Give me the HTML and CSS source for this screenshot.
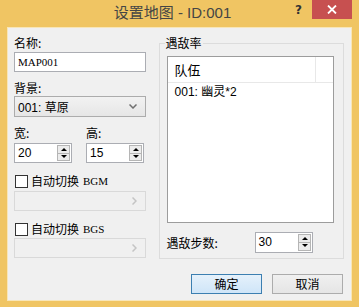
FILE: index.html
```html
<!DOCTYPE html>
<html lang="zh">
<head>
    <meta charset="UTF-8">
    <title>设置地图 - ID:001</title>
    <link rel="stylesheet" href="styles.css">
</head>
<body>
    <div class="window">
        <div class="titlebar">
            <span class="title">设置地图 - ID:001</span>
            <span class="help">?</span>
            <span class="close">
                <svg width="10" height="9" viewBox="0 0 10 9"><path d="M1 0.5 L9 8.5 M9 0.5 L1 8.5" stroke="#fff" stroke-width="1.8" fill="none"/></svg>
            </span>
        </div>

        <div class="client">
            <div class="main">
                <div class="left">
                    <div class="lbl">名称:</div>
                    <div class="textbox mono">MAP001</div>

                    <div class="lbl gap">背景:</div>
                    <div class="combo">
                        <span>001: 草原</span>
                        <svg width="8" height="5" viewBox="0 0 8 5"><path d="M0.5 0.5 L4 4 L7.5 0.5" stroke="#707070" stroke-width="1.5" fill="none"/></svg>
                    </div>

                    <div class="size-row">
                        <div class="size-field">
                            <div class="lbl">宽:</div>
                            <div class="spin">
                                <span class="val">20</span>
                                <span class="arrows"><span class="up"></span><span class="down"></span></span>
                            </div>
                        </div>
                        <div class="size-field">
                            <div class="lbl">高:</div>
                            <div class="spin">
                                <span class="val">15</span>
                                <span class="arrows"><span class="up"></span><span class="down"></span></span>
                            </div>
                        </div>
                    </div>

                    <div class="check"><span class="box"></span>自动切换 <span class="mono">BGM</span></div>
                    <div class="combo disabled">
                        <svg width="5" height="8" viewBox="0 0 5 8"><path d="M0.5 0.5 L4 4 L0.5 7.5" stroke="#c4c4c4" stroke-width="1.5" fill="none"/></svg>
                    </div>

                    <div class="check"><span class="box"></span>自动切换 <span class="mono">BGS</span></div>
                    <div class="combo disabled tight">
                        <svg width="5" height="8" viewBox="0 0 5 8"><path d="M0.5 0.5 L4 4 L0.5 7.5" stroke="#c4c4c4" stroke-width="1.5" fill="none"/></svg>
                    </div>
                </div>

                <div class="group">
                    <div class="group-title">遇敌率</div>
                    <div class="listbox">
                        <div class="list-head">
                            <span class="col">队伍</span>
                            <span class="col-rest"></span>
                        </div>
                        <div class="list-row">001: 幽灵*2</div>
                    </div>
                    <div class="steps">
                        <span>遇敌步数:</span>
                        <div class="spin">
                            <span class="val">30</span>
                            <span class="arrows"><span class="up"></span><span class="down"></span></span>
                        </div>
                    </div>
                </div>
            </div>

            <div class="buttons">
                <div class="btn default">确定</div>
                <div class="btn">取消</div>
            </div>
        </div>
    </div>
</body>
</html>
```

FILE: styles.css
```css
body {
    margin: 0;
    font-family: "Noto Sans CJK SC", "Liberation Sans", sans-serif;
    font-size: 12px;
    color: #000;
}
.window {
    width: 359px;
    height: 307px;
    background: #f0c563;
    box-sizing: border-box;
    padding: 0 7px 6px 7px;
}
.titlebar {
    height: 27px;
    display: flex;
    align-items: flex-start;
}
.title {
    flex: 1;
    text-align: center;
    font-family: "Liberation Sans", "Noto Sans CJK SC", sans-serif;
    font-size: 15px;
    line-height: 26px;
    color: #454545;
    padding-left: 43px;
}
.help {
    width: 14px;
    margin-top: 3px;
    margin-right: 3px;
    font-family: "DejaVu Sans", sans-serif;
    font-weight: bold;
    font-size: 12px;
    line-height: 14px;
    color: #333;
}
.close {
    width: 40px;
    height: 19px;
    background: #c75050;
    display: flex;
    align-items: center;
    justify-content: center;
}
.client {
    height: 274px;
    box-sizing: border-box;
    background: #f0f0f0;
    border: 1px solid #f8e6b8;
    padding: 7px 7px 0 6px;
}
.main {
    display: flex;
    align-items: flex-start;
}
.left {
    width: 132px;
    display: flex;
    flex-direction: column;
}
.lbl {
    height: 16px;
    line-height: 16px;
}
.lbl.gap {
    margin-top: 8px;
}
.mono {
    font-family: "Liberation Serif", serif;
    font-size: 11px;
}
.textbox {
    margin-top: 1px;
    height: 20px;
    box-sizing: border-box;
    background: #fff;
    border: 1px solid #abadb3;
    line-height: 18px;
    padding-left: 3px;
}
.combo {
    height: 21px;
    box-sizing: border-box;
    background: linear-gradient(#f2f2f2, #e6e6e6);
    border: 1px solid #acacac;
    display: flex;
    align-items: center;
    justify-content: space-between;
    padding: 0 8px 0 3px;
    font-family: "Liberation Sans", "Noto Sans CJK SC", sans-serif;
    font-size: 12px;
}
.combo.disabled {
    height: 20px;
    margin-top: 2px;
    background: #f0f0f0;
    border-color: #d9d9d9;
    justify-content: flex-end;
}
.combo.disabled.tight {
    margin-top: 1px;
}
.size-row {
    display: flex;
    gap: 14px;
    margin-top: 8px;
}
.size-field {
    width: 58px;
    display: flex;
    flex-direction: column;
    gap: 2px;
}
.spin {
    width: 58px;
    height: 20px;
    box-sizing: border-box;
    background: #fff;
    border: 1px solid #abadb3;
    display: flex;
    justify-content: space-between;
    padding: 1px 1px 1px 3px;
    font-family: "Liberation Sans", sans-serif;
    font-size: 12px;
    line-height: 16px;
}
.arrows {
    width: 13px;
    display: flex;
    flex-direction: column;
}
.arrows span {
    flex: 1;
    border: 1px solid #b5b5b5;
    background: #ececec;
    position: relative;
}
.arrows .down {
    border-top: none;
}
.arrows span::after {
    content: "";
    position: absolute;
    left: 3px;
    top: 2px;
    border-left: 3px solid transparent;
    border-right: 3px solid transparent;
}
.arrows .up::after {
    border-bottom: 3px solid #000;
}
.arrows .down::after {
    top: 1px;
    border-top: 3px solid #000;
}
.check {
    margin-top: 10px;
    height: 16px;
    line-height: 16px;
    display: flex;
    align-items: center;
}
.check .mono {
    margin-left: 4px;
}
.box {
    width: 13px;
    height: 13px;
    box-sizing: border-box;
    border: 1px solid #333;
    background: #fff;
    margin: 0 3px 0 1px;
}
.group {
    margin-left: 13px;
    margin-top: 8px;
    width: 186px;
    height: 216px;
    box-sizing: border-box;
    border: 1px solid #dcdcdc;
    padding: 0 9px 0 7px;
}
.group-title {
    margin-top: -9px;
    margin-left: -2px;
    height: 16px;
    line-height: 16px;
    padding: 0 1px;
    background: #f0f0f0;
    width: max-content;
}
.listbox {
    margin-top: 5px;
    height: 167px;
    box-sizing: border-box;
    background: #fff;
    border: 1px solid #9c9c9c;
}
.list-head {
    height: 25px;
    display: flex;
    border-bottom: 1px solid #e8e8e8;
}
.list-head .col {
    width: 148px;
    padding-left: 7px;
    box-sizing: border-box;
    font-size: 13px;
    line-height: 25px;
    border-right: 1px solid #e8e8e8;
}
.list-row {
    padding-left: 7px;
    height: 16px;
    line-height: 16px;
    margin-top: 1px;
    font-family: "Liberation Sans", "Noto Sans CJK SC", sans-serif;
}
.steps {
    margin-top: 9px;
    display: flex;
    align-items: center;
    justify-content: space-between;
    width: 146px;
}
.steps .spin {
    height: 21px;
}
.buttons {
    display: flex;
    justify-content: flex-end;
    gap: 10px;
    margin-top: 15px;
    padding-right: 1px;
}
.btn {
    width: 71px;
    height: 20px;
    box-sizing: border-box;
    border: 1px solid #acacac;
    background: linear-gradient(#f0f0f0, #e5e5e5);
    text-align: center;
    line-height: 18px;
}
.btn.default {
    border-color: #3c7fb1;
    background: linear-gradient(#e5f1fb, #cfe5f8);
}
```
